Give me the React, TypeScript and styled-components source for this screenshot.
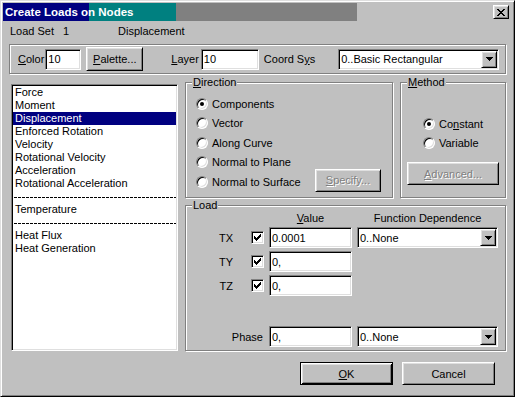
import { createGlobalStyle, css, styled } from "styled-components";

const GlobalStyle = createGlobalStyle`
  * {
    box-sizing: border-box;
  }
  html,
  body {
    margin: 0;
    padding: 0;
    background: #c0c0c0;
  }
  body {
    font-family: "Liberation Sans", Arial, sans-serif;
    font-size: 11px;
    color: #000;
  }
`;

const raised = css`
  border: 1px solid;
  border-color: #fff #000 #000 #fff;
  box-shadow: inset 1px 1px #dfdfdf, inset -1px -1px #808080;
`;

const sunken = css`
  border: 1px solid;
  border-color: #808080 #fff #fff #808080;
  box-shadow: inset 1px 1px #000, inset -1px -1px #dfdfdf;
`;

const etched = css`
  border: 1px solid #808080;
  box-shadow: inset 1px 1px #fff, 1px 1px #fff;
`;

// pixel glyphs, rows of [x, y, w]
const CLOSE_PIXELS = [
  [0, 0, 2], [6, 0, 2],
  [1, 1, 2], [5, 1, 2],
  [2, 2, 4],
  [3, 3, 2],
  [2, 4, 4],
  [1, 5, 2], [5, 5, 2],
  [0, 6, 2], [6, 6, 2],
];
const ARROW_PIXELS = [[0, 0, 7], [1, 1, 5], [2, 2, 3], [3, 3, 1]];
const CHECK_COLUMNS = [2, 3, 4, 3, 2, 1, 0];

const PixelGlyph = ({ w, h, pixels }: { w: number; h: number; pixels: number[][] }) => (
  <svg width={w} height={h} viewBox={`0 0 ${w} ${h}`} shapeRendering="crispEdges">
    {pixels.map(([x, y, len], i) => (
      <rect key={i} x={x} y={y} width={len} height={1} fill="#000" />
    ))}
  </svg>
);

const CheckGlyph = () => (
  <svg width={7} height={7} viewBox="0 0 7 7" shapeRendering="crispEdges">
    {CHECK_COLUMNS.map((top, x) => (
      <rect key={x} x={x} y={top} width={1} height={3} fill="#000" />
    ))}
  </svg>
);

const LIST_ITEMS = [
  "Force",
  "Moment",
  "Displacement",
  "Enforced Rotation",
  "Velocity",
  "Rotational Velocity",
  "Acceleration",
  "Rotational Acceleration",
  "-",
  "Temperature",
  "-",
  "Heat Flux",
  "Heat Generation",
];

const DIRECTIONS = ["Components", "Vector", "Along Curve", "Normal to Plane", "Normal to Surface"];

const CreateLoadsDialog = () => {
  return (
    <Window>
      <GlobalStyle />
      <TitleBar>
        <TitleText>Create Loads on Nodes</TitleText>
        <CloseButton>
          <PixelGlyph w={8} h={7} pixels={CLOSE_PIXELS} />
        </CloseButton>
      </TitleBar>

      <Body>
        <InfoRow>
          <span>Load Set</span>
          <span>1</span>
          <span>Displacement</span>
        </InfoRow>

        <TopGroup>
          <Label>
            <u>C</u>olor
          </Label>
          <TextBox $w={36} $ml={1} defaultValue="10" />
          <Button $w={57} $h={24} $ml={5}>
            <u>P</u>alette...
          </Button>
          <Label $ml={28}>
            <u>L</u>ayer
          </Label>
          <TextBox $w={58} $ml={2} defaultValue="10" />
          <Label $ml={5}>
            Coord S<u>y</u>s
          </Label>
          <DropDown $w={161} $ml={23}>
            <DropText>0..Basic Rectangular</DropText>
            <ArrowButton>
              <PixelGlyph w={7} h={4} pixels={ARROW_PIXELS} />
            </ArrowButton>
          </DropDown>
        </TopGroup>

        <MainRow>
          <ListBox>
            {LIST_ITEMS.map((item, i) =>
              item === "-" ? (
                <Separator key={i} />
              ) : (
                <ListItem key={i} $selected={item === "Displacement"}>
                  {item}
                </ListItem>
              )
            )}
          </ListBox>

          <RightColumn>
            <UpperRow>
              <GroupBox $w={208}>
                <Caption>
                  <u>D</u>irection
                </Caption>
                <DirectionBody>
                  <RadioColumn>
                    {DIRECTIONS.map((d, i) => (
                      <RadioRow key={d}>
                        <RadioCircle $checked={i === 0} />
                        {d}
                      </RadioRow>
                    ))}
                  </RadioColumn>
                  <Button $w={66} $h={23} disabled>
                    <u>S</u>pecify...
                  </Button>
                </DirectionBody>
              </GroupBox>

              <GroupBox>
                <Caption>
                  <u>M</u>ethod
                </Caption>
                <MethodBody>
                  <RadioColumn>
                    <RadioRow>
                      <RadioCircle $checked />
                      <span>
                        Co<u>n</u>stant
                      </span>
                    </RadioRow>
                    <RadioRow>
                      <RadioCircle />
                      Variable
                    </RadioRow>
                  </RadioColumn>
                  <Button $w={92} $h={23} disabled>
                    <u>A</u>dvanced...
                  </Button>
                </MethodBody>
              </GroupBox>
            </UpperRow>

            <LoadBox>
              <Caption>Load</Caption>
              <LoadGrid>
                <HeaderCell $col={3}>
                  <u>V</u>alue
                </HeaderCell>
                <HeaderCell $col={4}>Function Dependence</HeaderCell>

                {["TX", "TY", "TZ"].map((axis, i) => (
                  <AxisRow key={axis} $row={i + 2}>
                    <AxisLabel>{axis}</AxisLabel>
                    <CheckBox>
                      <CheckGlyph />
                    </CheckBox>
                    <TextBox $w={83} defaultValue={i === 0 ? "0.0001" : "0,"} />
                    {i === 0 && (
                      <DropDown $w={141}>
                        <DropText>0..None</DropText>
                        <ArrowButton>
                          <PixelGlyph w={7} h={4} pixels={ARROW_PIXELS} />
                        </ArrowButton>
                      </DropDown>
                    )}
                  </AxisRow>
                ))}

                <AxisRow $row={6}>
                  <PhaseLabel>Phase</PhaseLabel>
                  <TextBox $w={83} defaultValue="0," />
                  <DropDown $w={141}>
                    <DropText>0..None</DropText>
                    <ArrowButton>
                      <PixelGlyph w={7} h={4} pixels={ARROW_PIXELS} />
                    </ArrowButton>
                  </DropDown>
                </AxisRow>
              </LoadGrid>
            </LoadBox>
          </RightColumn>
        </MainRow>

        <ButtonRow>
          <Button $w={93} $h={23} $default>
            <u>O</u>K
          </Button>
          <Button $w={93} $h={23}>
            Cancel
          </Button>
        </ButtonRow>
      </Body>
    </Window>
  );
};

const Window = styled.div`
  width: 515px;
  height: 397px;
  display: flex;
  flex-direction: column;
  padding: 2px;
  background: #c0c0c0;
  border: 1px solid;
  border-color: #dfdfdf #000 #000 #dfdfdf;
  box-shadow: inset 1px 1px #fff, inset -1px -1px #808080;
`;

const TitleBar = styled.div`
  height: 18px;
  display: flex;
  align-items: center;
  justify-content: space-between;
  padding: 0 3px 0 2px;
  background: linear-gradient(
    to right,
    #000080 0 86px,
    #008080 86px 173px,
    #808080 173px 354px,
    transparent 354px
  );
`;

const TitleText = styled.span`
  color: #ffffff;
  font-weight: 700;
  font-size: 11.5px;
  white-space: nowrap;
`;

const CloseButton = styled.span`
  ${raised};
  width: 16px;
  height: 14px;
  display: flex;
  align-items: center;
  justify-content: center;
  background: #c0c0c0;
`;

const Body = styled.div`
  flex: 1;
  display: flex;
  flex-direction: column;
  padding: 0 6px;
`;

const InfoRow = styled.div`
  display: grid;
  grid-template-columns: 53px 55px auto;
  margin-top: 4px;
  padding-left: 1px;
  line-height: 13px;
`;

const TopGroup = styled.div`
  ${etched};
  height: 30px;
  margin-top: 6px;
  display: flex;
  align-items: center;
  padding-left: 8px;
`;

const Label = styled.span<{ $ml?: number }>`
  margin-left: ${(p) => p.$ml ?? 0}px;
  white-space: nowrap;
`;

const TextBox = styled.input<{ $w: number; $ml?: number }>`
  ${sunken};
  width: ${(p) => p.$w}px;
  height: 21px;
  margin: 0 0 0 ${(p) => p.$ml ?? 0}px;
  padding: 0 2px;
  background: #fff;
  font: inherit;
  color: #000;
  outline: none;
`;

const Button = styled.button<{ $w: number; $h: number; $ml?: number; $default?: boolean }>`
  ${raised};
  width: ${(p) => p.$w}px;
  height: ${(p) => p.$h}px;
  margin-left: ${(p) => p.$ml ?? 0}px;
  padding: 0;
  background: #c0c0c0;
  font: inherit;
  color: #000;
  flex-shrink: 0;
  ${(p) =>
    p.$default &&
    css`
      border: 1px solid #000;
      box-shadow: inset 1px 1px #fff, inset -1px -1px #000, inset 2px 2px #dfdfdf,
        inset -2px -2px #808080;
    `}
  &:disabled {
    color: #808080;
    text-shadow: 1px 1px #fff;
  }
`;

const DropDown = styled.div<{ $w: number; $ml?: number }>`
  ${sunken};
  width: ${(p) => p.$w}px;
  height: 21px;
  margin-left: ${(p) => p.$ml ?? 0}px;
  padding: 1px;
  display: flex;
  align-items: center;
  background: #fff;
`;

const DropText = styled.span`
  flex: 1;
  padding-left: 1px;
  white-space: nowrap;
`;

const ArrowButton = styled.span`
  ${raised};
  width: 16px;
  height: 17px;
  display: flex;
  align-items: center;
  justify-content: center;
  background: #c0c0c0;
`;

const MainRow = styled.div`
  display: flex;
  gap: 7px;
  margin-top: 8px;
`;

const ListBox = styled.div`
  ${sunken};
  width: 167px;
  height: 267px;
  margin: 2px 0 0 2px;
  padding: 1px;
  background: #fff;
  overflow: hidden;
`;

const ListItem = styled.div<{ $selected?: boolean }>`
  height: 13px;
  line-height: 13px;
  padding-left: 2px;
  white-space: nowrap;
  background: ${(p) => (p.$selected ? "#000080" : "transparent")};
  color: ${(p) => (p.$selected ? "#fff" : "#000")};
`;

const Separator = styled.div`
  height: 13px;
  background: repeating-linear-gradient(to right, #000 0 3px, transparent 3px 4px) 1px 7px / 100% 1px
    no-repeat;
`;

const RightColumn = styled.div`
  flex: 1;
  display: flex;
  flex-direction: column;
`;

const UpperRow = styled.div`
  height: 116px;
  display: flex;
  gap: 7px;
`;

const GroupBox = styled.div<{ $w?: number }>`
  ${etched};
  display: flex;
  flex-direction: column;
  ${(p) => (p.$w ? `width: ${p.$w}px;` : "flex: 1;")}
`;

const Caption = styled.div`
  align-self: flex-start;
  margin: -7px 0 0 6px;
  padding: 0 1px;
  line-height: 13px;
  background: #c0c0c0;
`;

const DirectionBody = styled.div`
  flex: 1;
  display: flex;
  align-items: flex-end;
  justify-content: space-between;
  padding: 5px 11px 12px 10px;
`;

const RadioColumn = styled.div`
  display: flex;
  flex-direction: column;
  align-self: flex-start;
`;

const RadioRow = styled.div`
  height: 19.5px;
  display: flex;
  align-items: center;
  gap: 4px;
  white-space: nowrap;
`;

const RadioCircle = styled.span<{ $checked?: boolean }>`
  width: 12px;
  height: 12px;
  flex-shrink: 0;
  display: flex;
  align-items: center;
  justify-content: center;
  border-radius: 50%;
  border: 1px solid;
  border-color: #808080 #fff #fff #808080;
  background: #fff;
  box-shadow: inset 1px 1px #000, inset -1px -1px #dfdfdf;

  &::after {
    content: "";
    width: 4px;
    height: 4px;
    border-radius: 50%;
    background: ${(p) => (p.$checked ? "#000" : "transparent")};
  }
`;

const MethodBody = styled.div`
  flex: 1;
  display: flex;
  flex-direction: column;
  align-items: center;
  justify-content: flex-end;
  padding-bottom: 12px;

  ${RadioColumn} {
    align-self: center;
    margin-bottom: 9px;
  }
`;

const LoadBox = styled(GroupBox)`
  height: 145px;
  margin-top: 7px;
`;

const LoadGrid = styled.div`
  flex: 1;
  display: grid;
  grid-template-columns: 50px 13px 83px 141px;
  grid-template-rows: 12px 21px 21px 21px 1fr 21px;
  column-gap: 5px;
  row-gap: 3px;
  align-items: center;
  padding: 0 0 3px 10px;
`;

const HeaderCell = styled.div<{ $col: number }>`
  grid-row: 1;
  grid-column: ${(p) => p.$col};
  text-align: center;
  line-height: 12px;
  white-space: nowrap;
`;

const AxisRow = styled.div<{ $row: number }>`
  grid-row: ${(p) => p.$row};
  grid-column: 1 / -1;
  display: grid;
  grid-template-columns: subgrid;
  align-items: center;
`;

const AxisLabel = styled.span`
  justify-self: end;
  margin-right: 13px;
`;

const PhaseLabel = styled.span`
  grid-column: 1 / 3;
  justify-self: end;
  margin-right: 1px;
`;

const CheckBox = styled.span`
  ${sunken};
  width: 13px;
  height: 13px;
  display: flex;
  align-items: center;
  justify-content: center;
  background: #fff;
`;

const ButtonRow = styled.div`
  display: flex;
  justify-content: flex-end;
  gap: 9px;
  margin-top: 11px;
  padding-right: 11px;
`;

export default CreateLoadsDialog;
